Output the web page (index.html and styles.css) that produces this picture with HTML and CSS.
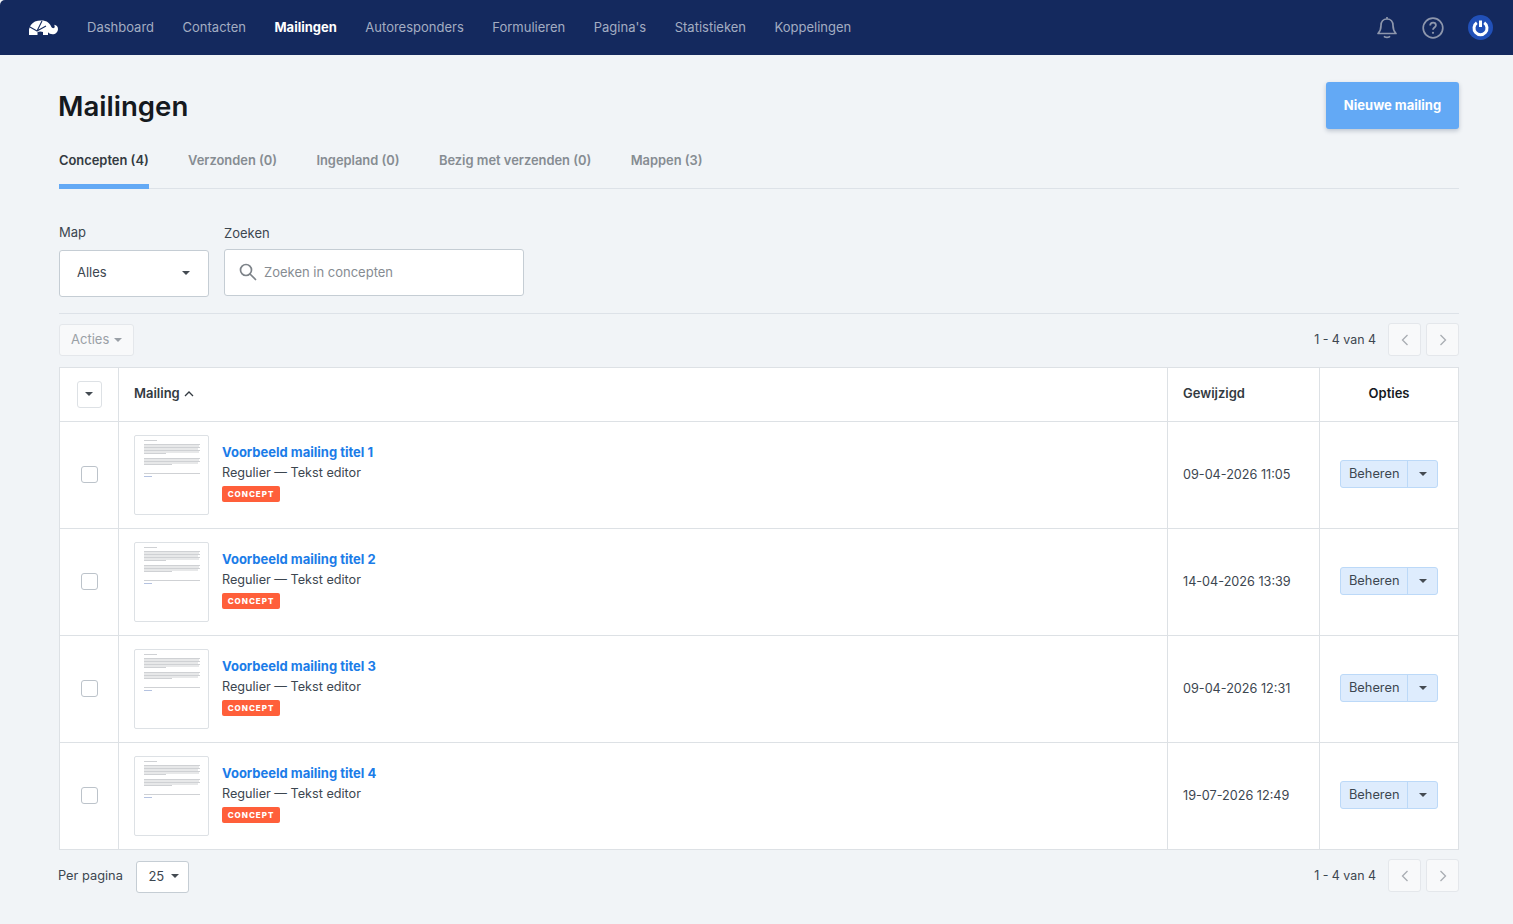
FILE: index.html
```html
<!DOCTYPE html>
<html lang="nl">
  <head>
    <meta charset="UTF-8" />
    <meta name="viewport" content="width=device-width, initial-scale=1.0" />
    <title>Mailingen</title>
    <link rel="stylesheet" href="styles.css">
  </head>

  <body>
    <svg class="sprites" width="0" height="0">
      <symbol id="thumb" viewBox="0 0 75 80">
        <g fill="#cfd1d4">
          <rect x="10" y="5" width="13" height="1"/>
          <rect x="10" y="9" width="56" height="1"/>
          <rect x="10" y="10.500" width="55" height="1"/>
          <rect x="10" y="12" width="56" height="1"/>
          <rect x="10" y="13.500" width="54" height="1"/>
          <rect x="10" y="15" width="56" height="1"/>
          <rect x="10" y="16.500" width="55" height="1"/>
          <rect x="10" y="18" width="22" height="1"/>
          <rect x="10" y="23" width="56" height="1"/>
          <rect x="10" y="24.500" width="55" height="1"/>
          <rect x="10" y="26" width="56" height="1"/>
          <rect x="10" y="27.500" width="54" height="1"/>
          <rect x="10" y="29" width="28" height="1"/>
          <rect x="10" y="38" width="56" height="1"/>
        </g>
        <rect x="10" y="41" width="8" height="1" fill="#b4c2e0"/>
      </symbol>
      <symbol id="caret" viewBox="0 0 8 4">
        <path d="M0 0h8L4 4z"/>
      </symbol>
    </svg>

    <nav class="topbar">
      <a class="logo" href="#">
        <svg width="32" height="16" viewBox="0 0 32 16">
          <path fill="#fff" d="M1 15V9.500C1.500 6 4 3 7 1.500 10 .5 14 .3 17 1c2.500.6 4 2 5 3.500 1 1.500 1.500 3 2.500 3.500 1.200.5 2.300-.2 2.200-1.500l-.4-1.800c2 .3 3.700 1.800 3.700 4.300 0 3-2.500 5.300-5.500 5.300-2 0-3.500-.8-4.500-2V15h-5v-3c-1.500-.7-4-.7-5.500 0v3z"/>
          <path fill="none" stroke="#14295e" stroke-width="1.100" d="M1 6.500 9 11 14 1M9 11l9-5"/>
        </svg>
      </a>
      <a class="nav-item" href="#">Dashboard</a>
      <a class="nav-item" href="#">Contacten</a>
      <a class="nav-item active" href="#">Mailingen</a>
      <a class="nav-item" href="#">Autoresponders</a>
      <a class="nav-item" href="#">Formulieren</a>
      <a class="nav-item" href="#">Pagina's</a>
      <a class="nav-item" href="#">Statistieken</a>
      <a class="nav-item" href="#">Koppelingen</a>

      <div class="nav-icons">
        <svg width="22" height="24" viewBox="0 0 22 24" fill="none" stroke="#8e97ad" stroke-width="1.700">
          <path d="M11 3c-3.800 0-6 2.800-6 6.500 0 4-1 6-3 8h18c-2-2-3-4-3-8C17 5.800 14.800 3 11 3zM11 1v2" stroke-linejoin="round"/>
          <path d="M8.500 20.700c1.500.8 3.500.8 5 0" stroke-linecap="round"/>
        </svg>
        <svg width="22" height="22" viewBox="0 0 22 22" fill="none" stroke="#8e97ad" stroke-width="1.700">
          <circle cx="11" cy="11" r="9.800"/>
          <path d="M8.200 8.600c0-1.800 1.300-2.900 2.900-2.900s2.800 1 2.800 2.500c0 2.200-2.900 2.300-2.900 4.500" stroke-width="1.800"/>
          <circle cx="11" cy="15.800" r="1.100" fill="#8e97ad" stroke="none"/>
        </svg>
        <svg class="power" width="25" height="25" viewBox="0 0 25 25" fill="none">
          <circle cx="12.500" cy="12.500" r="12.500" fill="#2150b8"/>
          <path d="M8.800 7.800a6.500 6.500 0 1 0 7.400 0" stroke="#fff" stroke-width="3"/>
          <path d="M12.500 5.500v6.500" stroke="#fff" stroke-width="3"/>
        </svg>
      </div>
    </nav>

    <main class="content">
      <header class="page-head">
        <h1>Mailingen</h1>
        <a class="btn-primary" href="#">Nieuwe mailing</a>
      </header>

      <ul class="tabs">
        <li class="active">Concepten (4)</li>
        <li>Verzonden (0)</li>
        <li>Ingepland (0)</li>
        <li>Bezig met verzenden (0)</li>
        <li>Mappen (3)</li>
      </ul>

      <section class="filters">
        <div class="field field-map">
          <label>Map</label>
          <div class="select">
            Alles
            <svg class="caret"><use href="#caret"/></svg>
          </div>
        </div>
        <div class="field">
          <label>Zoeken</label>
          <div class="search">
            <svg width="18" height="18" viewBox="0 0 18 18" fill="none" stroke="#7d8389" stroke-width="1.700">
              <circle cx="7" cy="7" r="5.500"/>
              <path d="M11 11l5.500 5.500" stroke-linecap="round"/>
            </svg>
            <span>Zoeken in concepten</span>
          </div>
        </div>
      </section>

      <div class="toolbar">
        <button class="btn-light">Acties <svg class="caret"><use href="#caret"/></svg></button>
        <div class="pager">
          <span>1 - 4 van 4</span>
          <a class="page-btn" href="#"><svg width="8" height="12" viewBox="0 0 8 12"><path d="M6.500 1 1.500 6l5 5"/></svg></a>
          <a class="page-btn" href="#"><svg width="8" height="12" viewBox="0 0 8 12"><path d="M1.500 1l5 5-5 5"/></svg></a>
        </div>
      </div>

      <table class="mail-table">
        <thead>
          <tr>
            <th class="col-check"><span class="check-menu"><svg class="caret"><use href="#caret"/></svg></span></th>
            <th class="col-mail">Mailing
              <svg class="sort" width="10" height="6" viewBox="0 0 10 6"><path d="M1 5l4-4 4 4"/></svg>
            </th>
            <th class="col-date">Gewijzigd</th>
            <th class="col-opts">Opties</th>
          </tr>
        </thead>
        <tbody>
          <tr>
            <td class="col-check"><span class="checkbox"></span></td>
            <td>
              <div class="mail">
                <div class="thumb"><svg width="75" height="80"><use href="#thumb"/></svg></div>
                <div class="mail-info">
                  <a href="#">Voorbeeld mailing titel 1</a>
                  <p>Regulier — Tekst editor</p>
                  <span class="badge">CONCEPT</span>
                </div>
              </div>
            </td>
            <td class="col-date">09-04-2026 11:05</td>
            <td class="col-opts">
              <div class="split"><span>Beheren</span><span class="split-caret"><svg class="caret"><use href="#caret"/></svg></span></div>
            </td>
          </tr>
          <tr>
            <td class="col-check"><span class="checkbox"></span></td>
            <td>
              <div class="mail">
                <div class="thumb"><svg width="75" height="80"><use href="#thumb"/></svg></div>
                <div class="mail-info">
                  <a href="#">Voorbeeld mailing titel 2</a>
                  <p>Regulier — Tekst editor</p>
                  <span class="badge">CONCEPT</span>
                </div>
              </div>
            </td>
            <td class="col-date">14-04-2026 13:39</td>
            <td class="col-opts">
              <div class="split"><span>Beheren</span><span class="split-caret"><svg class="caret"><use href="#caret"/></svg></span></div>
            </td>
          </tr>
          <tr>
            <td class="col-check"><span class="checkbox"></span></td>
            <td>
              <div class="mail">
                <div class="thumb"><svg width="75" height="80"><use href="#thumb"/></svg></div>
                <div class="mail-info">
                  <a href="#">Voorbeeld mailing titel 3</a>
                  <p>Regulier — Tekst editor</p>
                  <span class="badge">CONCEPT</span>
                </div>
              </div>
            </td>
            <td class="col-date">09-04-2026 12:31</td>
            <td class="col-opts">
              <div class="split"><span>Beheren</span><span class="split-caret"><svg class="caret"><use href="#caret"/></svg></span></div>
            </td>
          </tr>
          <tr>
            <td class="col-check"><span class="checkbox"></span></td>
            <td>
              <div class="mail">
                <div class="thumb"><svg width="75" height="80"><use href="#thumb"/></svg></div>
                <div class="mail-info">
                  <a href="#">Voorbeeld mailing titel 4</a>
                  <p>Regulier — Tekst editor</p>
                  <span class="badge">CONCEPT</span>
                </div>
              </div>
            </td>
            <td class="col-date">19-07-2026 12:49</td>
            <td class="col-opts">
              <div class="split"><span>Beheren</span><span class="split-caret"><svg class="caret"><use href="#caret"/></svg></span></div>
            </td>
          </tr>
        </tbody>
      </table>

      <div class="table-foot">
        <div class="per-page">
          <span>Per pagina</span>
          <div class="per-select">25 <svg class="caret"><use href="#caret"/></svg></div>
        </div>
        <div class="pager">
          <span>1 - 4 van 4</span>
          <a class="page-btn" href="#"><svg width="8" height="12" viewBox="0 0 8 12"><path d="M6.500 1 1.500 6l5 5"/></svg></a>
          <a class="page-btn" href="#"><svg width="8" height="12" viewBox="0 0 8 12"><path d="M1.500 1l5 5-5 5"/></svg></a>
        </div>
      </div>
    </main>
  </body>
</html>
```

FILE: styles.css
```css
* {
  box-sizing: border-box;
}

html {
  background: #f1f4f7;
}

body {
  margin: 0;
  height: 924px;
  overflow: hidden;
  font-family: Inter, "Liberation Sans", sans-serif;
  font-size: 13px;
  color: #3c4650;
  background: #f1f4f7;
}

a {
  text-decoration: none;
}

.sprites {
  display: block;
  height: 0;
}

.caret {
  width: 8px;
  height: 4px;
  fill: #444b52;
}

/* top bar */
.topbar {
  display: flex;
  align-items: center;
  height: 55px;
  padding-left: 28px;
  background: #14295e;
  border-top-left-radius: 5px;
}

.logo {
  display: flex;
  width: 59px;
}

.nav-item {
  margin: 0 28.500px 2px 0;
  font-size: 13px;
  color: #a3adc2;
}

.nav-item.active {
  color: #fff;
  font-weight: 650;
}

.nav-icons {
  display: flex;
  align-items: center;
  gap: 24px;
  margin-left: auto;
  padding-right: 20px;
}

/* page */
.content {
  width: 1400px;
  margin-left: 59px;
}

.page-head {
  display: flex;
  justify-content: space-between;
  height: 74px;
  padding-top: 27px;
}

h1 {
  margin: 7px 0 0 -1px;
  font-size: 27.600px;
  line-height: 34px;
  font-weight: 600;
  color: #15191e;
}

.btn-primary {
  width: 133px;
  height: 47px;
  line-height: 46px;
  text-align: center;
  font-size: 13px;
  font-weight: 650;
  color: #fff;
  background: #63a9f5;
  border-radius: 3px;
  box-shadow: 0 2px 4px rgba(40, 60, 90, 0.25);
}

.tabs {
  display: flex;
  gap: 39.250px;
  height: 60px;
  margin: 0;
  padding: 0;
  list-style: none;
  border-bottom: 1px solid #dde2e8;
}

.tabs li {
  height: 60px;
  padding-top: 24px;
  font-size: 12.900px;
  font-weight: 600;
  color: #868c92;
}

.tabs li.active {
  color: #333a41;
  border-bottom: 5px solid #63a9f5;
}

.filters {
  display: flex;
  align-items: flex-end;
  gap: 15px;
  height: 125px;
  padding-bottom: 16px;
  border-bottom: 1px solid #dde2e8;
}

.field label {
  display: block;
  margin-bottom: 8px;
  line-height: 16px;
}

.field-map label {
  margin-bottom: 10px;
}

.select {
  display: flex;
  align-items: center;
  justify-content: space-between;
  width: 150px;
  height: 47px;
  padding: 0 18px 4px 17px;
  background: #fff;
  border: 1px solid #c5cdd4;
  border-radius: 3px;
}

.select .caret {
  margin-top: 2px;
}

.search {
  display: flex;
  align-items: center;
  gap: 7px;
  width: 300px;
  height: 47px;
  padding: 0 0 2px 14px;
  margin-bottom: 1px;
  color: #868c92;
  background: #fff;
  border: 1px solid #c5cdd4;
  border-radius: 3px;
}

.toolbar {
  display: flex;
  align-items: center;
  justify-content: space-between;
  height: 53px;
  padding-bottom: 2px;
}

.btn-light {
  height: 32px;
  width: 75px;
  padding: 0 0 2px;
  font: inherit;
  color: #9aa0a6;
  background: #f8f9fa;
  border: 1px solid #e4e7eb;
  border-radius: 3px;
}

.btn-light .caret {
  fill: #9aa0a6;
  margin-left: 1px;
  vertical-align: 2px;
}

.pager {
  display: flex;
  align-items: center;
  gap: 4px;
}

.pager span {
  margin: 0 7px 0 0;
  font-size: 12.400px;
}

.page-btn {
  display: flex;
  align-items: center;
  justify-content: center;
  width: 33px;
  height: 33px;
  margin-left: 1px;
  background: #f8f9fa;
  border: 1px solid #e4e7eb;
  border-radius: 3px;
}

.page-btn path {
  fill: none;
  stroke: #a9adb2;
  stroke-width: 1.300;
}

/* table */
.mail-table {
  width: 1400px;
  table-layout: fixed;
  border-collapse: collapse;
  background: #fff;
}

.mail-table th,
.mail-table td {
  padding: 0 0 2px;
  border: 1px solid #dde1e5;
}

.mail-table th {
  height: 54px;
  padding-bottom: 4px;
  font-size: 13px;
  font-weight: 600;
  text-align: left;
  color: #333a41;
}

.mail-table td {
  height: 107px;
}

.mail-table th.col-check,
.mail-table td.col-check {
  width: 59px;
  text-align: center;
}

.mail-table th.col-check {
  padding-bottom: 1px;
}

.mail-table th.col-mail {
  padding-left: 15px;
}

.sort path {
  fill: none;
  stroke: #333a41;
  stroke-width: 1.300;
}

.sort {
  margin-left: 1px;
  vertical-align: 1px;
}

.mail-table th.col-date,
.mail-table td.col-date {
  width: 152px;
  padding-left: 15px;
}

.mail-table td.col-date {
  font-size: 12.650px;
}

.mail-table th.col-opts,
.mail-table td.col-opts {
  width: 139px;
  text-align: center;
  color: #15191e;
}

.check-menu {
  display: inline-flex;
  align-items: center;
  justify-content: center;
  width: 25px;
  height: 27px;
  vertical-align: middle;
  border: 1px solid #dde1e5;
  border-radius: 3px;
}

.checkbox {
  display: inline-block;
  width: 17px;
  height: 17px;
  vertical-align: middle;
  border: 1px solid #bcc3ca;
  border-radius: 3px;
}

.mail {
  display: flex;
  align-items: center;
  gap: 13px;
  padding: 2px 0 0 15px;
}

.thumb {
  display: flex;
  width: 75px;
  height: 80px;
  border: 1px solid #dde1e5;
  border-radius: 2px;
}

.thumb svg {
  margin: -1px;
  filter: blur(0.3px);
}

.mail-info {
  padding-bottom: 5px;
}

.mail-info a {
  display: block;
  font-size: 13px;
  line-height: 18px;
  font-weight: 650;
  color: #1b7ce8;
}

.mail-info p {
  margin: 3px 0 4px;
  font-size: 12.650px;
  line-height: 18px;
}

.badge {
  display: block;
  width: 58px;
  height: 16px;
  font-size: 8px;
  line-height: 16px;
  font-weight: 800;
  letter-spacing: 1px;
  text-align: center;
  color: #fff;
  background: #ff5f3a;
  border-radius: 2px;
}

.split {
  display: inline-flex;
  align-items: center;
  width: 98px;
  height: 28px;
  font-size: 12.800px;
  color: #3c4650;
  background: #deecfd;
  border: 1px solid #bcd9f8;
  border-radius: 3px;
}

.split span:first-child {
  flex: 1;
  height: 26px;
  padding-left: 8px;
  line-height: 25px;
  text-align: left;
}

.split-caret {
  display: flex;
  align-items: center;
  justify-content: center;
  width: 30px;
  height: 26px;
  border-left: 1px solid #bcd9f8;
}

.table-foot {
  display: flex;
  align-items: flex-start;
  justify-content: space-between;
  height: 54px;
  padding-top: 9px;
}

.table-foot .per-page {
  margin-left: -1px;
  padding-top: 2px;
}

.per-page {
  display: flex;
  align-items: center;
  gap: 13px;
}

.per-page span {
  margin-bottom: 4px;
  font-size: 12.800px;
}

.per-select {
  display: flex;
  align-items: center;
  justify-content: center;
  gap: 7px;
  width: 53px;
  height: 32px;
  padding: 0 0 2px 3px;
  background: #fff;
  border: 1px solid #c5cdd4;
  border-radius: 3px;
}
```
